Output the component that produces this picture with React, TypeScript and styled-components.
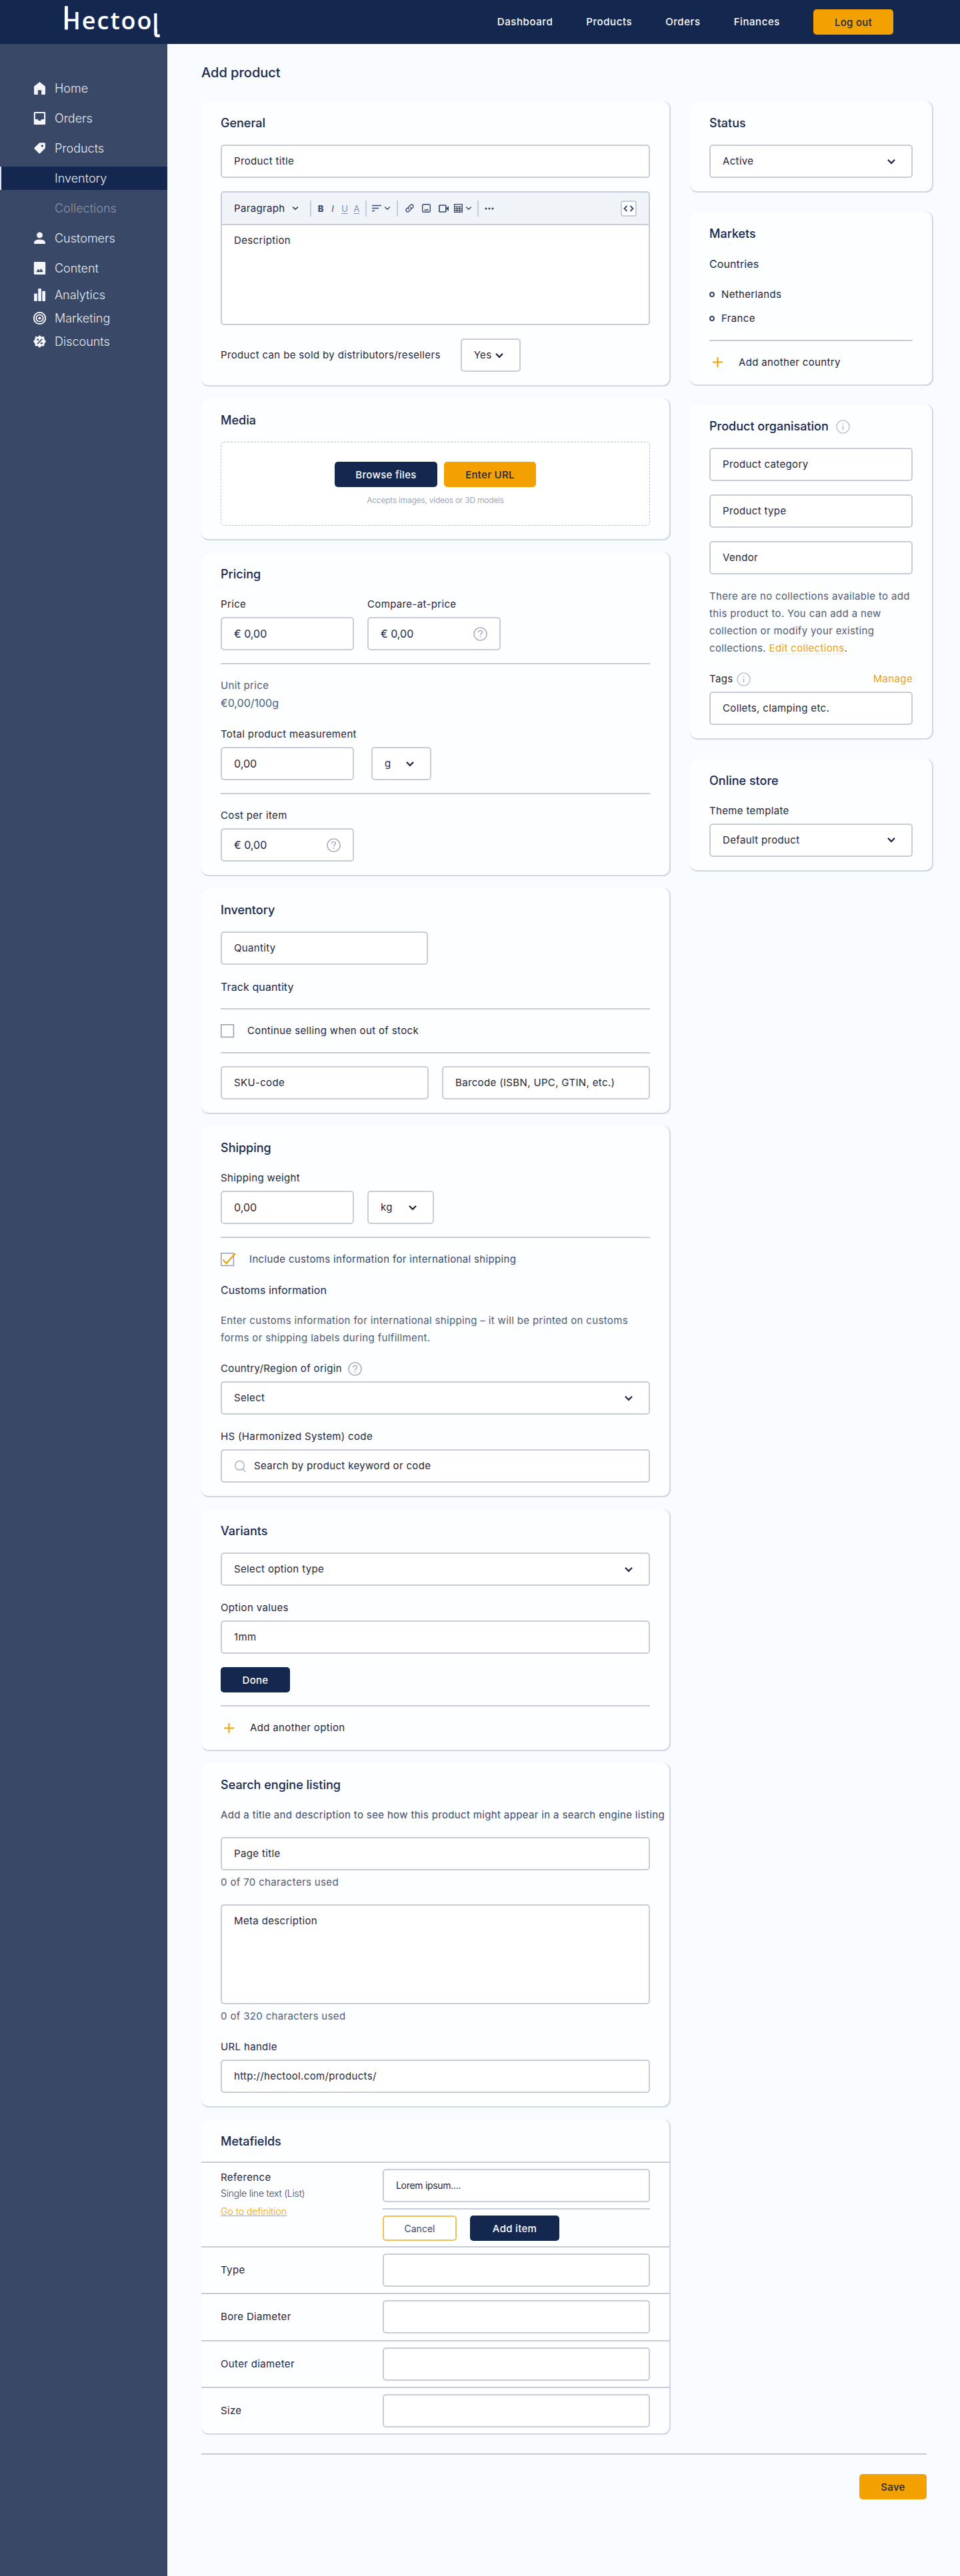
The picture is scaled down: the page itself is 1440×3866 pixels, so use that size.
import React from 'react'
import styled, { createGlobalStyle } from 'styled-components'

const navy = '#14274e'
const slate = '#394867'
const orange = '#f2a100'
const line = '#c8ccd8'
const ink = '#1e263a'
const muted = '#4f5b76'

const GlobalStyle = createGlobalStyle`
  *,
  *::before {
    box-sizing: border-box;
  }

  body {
    margin: 0;
    background: #f8fbff;
    color: ${ink};
    font-family: Inter, 'Open Sans', sans-serif;
    font-size: 15px;
    line-height: 26px;
    letter-spacing: 0.35px;
  }
`

const Header = styled.header`
  display: flex;
  align-items: center;
  justify-content: space-between;
  height: 66px;
  padding: 0 100px 0 94px;
  background: ${navy};

  nav {
    display: flex;
    align-items: center;
    gap: 50px;
  }

  a {
    color: #fff;
    font-weight: 500;
    letter-spacing: 0.58px;
    text-decoration: none;
  }
`

const Body = styled.div`
  display: flex;
  height: 3800px;
`

const Sidebar = styled.aside`
  flex-shrink: 0;
  width: 251px;
  background: ${slate};
  padding-top: 44px;
`

const NavItem = styled.a<{ $height?: number; $active?: boolean; $dim?: boolean }>`
  display: flex;
  align-items: center;
  height: ${({ $height }) => $height || 45}px;
  color: ${({ $dim }) => ($dim ? '#8d94a3' : '#e9ecf1')};
  font-size: 18px;
  font-weight: 300;
  letter-spacing: 0;

  > span {
    display: flex;
    align-items: center;
    width: 100%;
    height: 35px;
    padding-left: ${({ $active }) => ($active ? 48 : 50)}px;
    border-left: ${({ $active }) => ($active ? '2px solid #dfe4ee' : 'none')};
    background: ${({ $active }) => ($active ? navy : 'transparent')};
  }

  i {
    display: flex;
    width: 32px;
    color: #f3f5f9;
  }
`

const Main = styled.main`
  flex: 1;
  padding: 30px 42px 0 51px;

  h1 {
    margin: 0 0 29px;
    color: ${navy};
    font-size: 20px;
    font-weight: 500;
    line-height: 27px;
    letter-spacing: 0;
  }
`

const Columns = styled.div`
  display: grid;
  grid-template-columns: 702px 363px;
  gap: 31px;
  align-items: start;
`

const Column = styled.div<{ $gap: number }>`
  display: flex;
  flex-direction: column;
  gap: ${({ $gap }) => $gap}px;
`

const Card = styled.section<{ $flush?: boolean }>`
  display: flex;
  flex-direction: column;
  gap: 20px;
  padding: ${({ $flush }) => ($flush ? '20px 0 0' : '20px 29px 20px')};
  border-radius: 10px;
  background: #fdfeff;
  box-shadow: 1px 1px 1px 1px rgba(57, 72, 103, 0.2);
  clip-path: inset(0 -4px -4px 0);
`

const CardTitle = styled.h2`
  display: flex;
  align-items: center;
  gap: 11px;
  margin: 0 0 -1px;
  color: ${navy};
  font-size: 18px;
  font-weight: 500;
  line-height: 26px;
  letter-spacing: 0;
`

const SubTitle = styled.h3`
  margin: 0;
  color: ${navy};
  font-size: 16px;
  font-weight: 400;
  line-height: 26px;
  letter-spacing: 0.1px;
`

const Box = styled.div<{ $width?: number; $height?: number }>`
  display: flex;
  align-items: center;
  justify-content: space-between;
  width: ${({ $width }) => ($width ? `${$width}px` : '100%')};
  height: ${({ $height }) => $height || 50}px;
  padding: 0 24px 0 18px;
  border: 2px solid ${line};
  border-radius: 5px;
  background: #fff;
`

const TextArea = styled(Box)`
  align-items: flex-start;
  padding-top: 10px;
`

const Amount = styled.span`
  font-size: 16px;
  letter-spacing: 0;
`

const HelpBox = styled(Box)`
  padding-right: 18px;
`

const Row = styled.div<{ $gap?: number; $center?: boolean }>`
  display: flex;
  align-items: ${({ $center }) => ($center ? 'center' : 'flex-end')};
  gap: ${({ $gap }) => $gap || 20}px;
`

const FieldGroup = styled.div`
  display: flex;
  flex-direction: column;
  gap: 6px;
`

const Label = styled.div<{ $gap?: number }>`
  display: flex;
  align-items: center;
  gap: ${({ $gap }) => $gap || 10}px;
  height: 26px;
`

const LabelLink = styled.a`
  margin-left: auto;
  color: ${orange};
`

const Divider = styled.hr`
  width: 100%;
  height: 2px;
  margin: -1px 0;
  border: 0;
  background: ${line};
`

const Copy = styled.p<{ $tone?: string }>`
  margin: 0;
  color: ${({ $tone }) => $tone || muted};

  a {
    color: ${orange};
    text-decoration: underline;
    text-decoration-color: #e6e8ee;
    text-underline-offset: 3px;
  }
`

const WideCopy = styled(Copy)`
  margin-right: -25px;
  color: ${slate};
  white-space: nowrap;
`

const Counter = styled.div`
  height: 26px;
  margin: -15px 0 0;
  color: ${muted};
`

const Button = styled.button<{ $variant?: 'orange' | 'outline'; $width: number }>`
  width: ${({ $width }) => $width}px;
  height: 38px;
  padding: 0;
  border: ${({ $variant }) =>
    $variant === 'outline' ? '2px solid #f7bc50' : 'none'};
  border-radius: 5px;
  background: ${({ $variant }) =>
    $variant === 'orange' ? orange : $variant === 'outline' ? '#fff' : navy};
  color: ${({ $variant }) =>
    $variant === 'orange' ? navy : $variant === 'outline' ? slate : '#fff'};
  font-family: inherit;
  font-size: ${({ $variant }) => ($variant === 'outline' ? 14 : 15)}px;
  font-weight: ${({ $variant }) => ($variant === 'outline' ? 400 : 500)};
  letter-spacing: ${({ $variant }) => ($variant === 'outline' ? 0 : 0.3)}px;
`

const Editor = styled.div`
  height: 201px;
  border: 2px solid ${line};
  border-radius: 5px;
  background: #fff;
  overflow: hidden;

  p {
    margin: 10px 18px;
  }
`

const Toolbar = styled.div`
  display: flex;
  align-items: center;
  height: 49px;
  padding: 0 18px;
  border-bottom: 2px solid ${line};
  background: #f0f4f8;
  color: ${slate};
`

const ToolSeparator = styled.span`
  width: 2px;
  height: 24px;
  background: ${line};
`

const ParagraphSelect = styled.span`
  display: flex;
  align-items: center;
  justify-content: space-between;
  width: 114px;
  padding-right: 17px;
  color: ${ink};
`

const TextTools = styled.span`
  display: flex;
  padding: 0 4px 0 5px;
  font-size: 13px;
  letter-spacing: 0;

  > * {
    width: 18px;
    text-align: center;
  }

  b {
    font-weight: 800;
  }

  u {
    color: #8790a4;
    text-underline-offset: 2px;
  }
`

const ToolGroup = styled.span<{ $gap: number; $padding: string }>`
  display: flex;
  align-items: center;
  gap: ${({ $gap }) => $gap}px;
  padding: ${({ $padding }) => $padding};
`

const CodeButton = styled.span`
  display: flex;
  align-items: center;
  justify-content: center;
  width: 24px;
  height: 24px;
  margin-left: auto;
  border: 2px solid ${line};
  border-radius: 4px;
  background: #fff;
`

const DropZone = styled.div`
  display: flex;
  flex-direction: column;
  align-items: center;
  height: 126px;
  padding-top: 29px;
  border: 1px dashed #b9bfcd;
  border-radius: 5px;
  background: #fff;

  small {
    margin-top: 7px;
    color: #a0a8b9;
    font-size: 12px;
    letter-spacing: -0.25px;
  }
`

const CheckRow = styled.div<{ $gap: number }>`
  display: flex;
  align-items: center;
  gap: ${({ $gap }) => $gap}px;
  height: 26px;
`

const AddRow = styled.div`
  display: flex;
  align-items: center;
  gap: 24px;
  height: 26px;
  padding-left: 5px;
`

const CountryList = styled.ul`
  display: flex;
  flex-direction: column;
  gap: 10px;
  margin: 0;
  padding: 0;
  list-style: none;

  li {
    display: flex;
    align-items: center;
    gap: 10px;
  }

  li::before {
    content: '';
    width: 8px;
    height: 8px;
    border: 2px solid ${slate};
    border-radius: 50%;
  }
`

const SearchText = styled.span`
  display: flex;
  align-items: center;
  gap: 11px;
`

const MetaTitle = styled.div`
  padding: 0 29px;
`

const MetaRows = styled.div`
  margin-top: -2px;
`

const MetaRow = styled.div<{ $tall?: boolean }>`
  display: flex;
  align-items: ${({ $tall }) => ($tall ? 'flex-start' : 'center')};
  justify-content: space-between;
  height: ${({ $tall }) => ($tall ? '127px' : '70.3px')};
  padding: ${({ $tall }) => ($tall ? '9px 29px 0' : '0 29px')};
  border-top: 2px solid ${line};
`

const Definition = styled.div`
  padding-top: 1px;

  div {
    line-height: 24px;
  }

  small {
    display: block;
    color: ${slate};
    font-size: 14px;
    font-weight: 300;
    line-height: 24px;
    letter-spacing: -0.2px;
  }

  a {
    display: block;
    margin-top: 2px;
    color: ${orange};
    font-size: 14px;
    font-weight: 300;
    line-height: 26px;
    letter-spacing: 0;
    text-decoration: underline;
  }
`

const MetaValue = styled.div`
  display: flex;
  flex-direction: column;
  gap: 10px;
  width: 401px;

  > div:first-child {
    font-size: 14px;
    letter-spacing: -0.3px;
  }
`

const Footer = styled.footer`
  display: flex;
  flex-direction: column;
  align-items: flex-end;
  gap: 29px;
  width: 1088px;
  margin-top: 30px;
`

const FooterLine = styled(Divider)`
  margin: 0;
`

function Logo() {
  return (
    <svg width='150' height='56' viewBox='0 0 150 56' fill='#fff'>
      <rect x='3' y='4' width='4.9' height='35.5' rx='1' />
      <text x='-0.3' y='39.4' fontFamily='Open Sans' fontSize='36' fontWeight='600' letterSpacing='2'>
        Hectoo
      </text>
      <text x='134.2' y='42' fontFamily='Open Sans' fontSize='36' fontWeight='600'>
        l
      </text>
      <path d='M139.6 38v8q0 2.8 2.8 2.8h3.3' fill='none' stroke='#fff' strokeWidth='4.6' />
    </svg>
  )
}

function Chevron({ small }: { small?: boolean }) {
  return (
    <svg width={small ? 10 : 12} height={small ? 7 : 9} viewBox='0 0 12 9' fill='none'>
      <path
        d='M1 1.8l5 5 5-5'
        stroke='currentColor'
        strokeWidth={small ? 1.8 : 2.3}
      />
    </svg>
  )
}

function Badge({ glyph }: { glyph: 'i' | '?' }) {
  return (
    <svg width='21' height='21' viewBox='0 0 21 21' fill='none' stroke={glyph === 'i' ? '#b8bdca' : '#9aa3b5'}>
      <circle cx='10.5' cy='10.5' r='9.6' strokeWidth='1.4' />
      {glyph === 'i' ? (
        <path d='M10.5 5.5v1.8M10.5 9v6.5' strokeWidth='1.6' />
      ) : (
        <path
          d='M7.6 8.2c0-1.8 1.2-2.9 2.9-2.9s2.9 1 2.9 2.6c0 2.2-2.9 2.2-2.9 4.6M10.5 14.3v1.6'
          strokeWidth='1.3'
        />
      )}
    </svg>
  )
}

function Plus() {
  return (
    <svg width='15' height='15' viewBox='0 0 15 15' stroke={orange} strokeWidth='2'>
      <path d='M7.5 0v15M0 7.5h15' />
    </svg>
  )
}

function Checkbox({ checked }: { checked?: boolean }) {
  return (
    <svg width='23' height='22' viewBox='0 0 23 22' fill='none'>
      <rect x='0.8' y='1.8' width='18.6' height='18.6' fill='#fff' stroke='#9aa3b5' strokeWidth='1.6' />
      {checked && (
        <path d='M3.5 11.5l5 5.5L22 2.2' stroke={orange} strokeWidth='2.3' />
      )}
    </svg>
  )
}

function SearchIcon() {
  return (
    <svg width='19' height='19' viewBox='0 0 19 19' fill='none' stroke='#aab1c0' strokeWidth='1.5'>
      <circle cx='8.5' cy='8.3' r='6.8' />
      <path d='M13 13.5l4.5 4.5' />
    </svg>
  )
}

const navIcons: Record<string, React.ReactNode> = {
  home: <path d='M9 0L1 6.5V17q0 1 1 1h4.5v-6.5h5V18H16q1 0 1-1V6.5z' />,
  orders: (
    <path
      fillRule='evenodd'
      d='M2 0h14q1.2 0 1.2 1.2v15.6q0 1.2-1.2 1.2H2q-1.2 0-1.2-1.2V1.2Q.8 0 2 0zm.8 2v8.5h3.4l1.5 2h2.6l1.5-2h3.4V2z'
    />
  ),
  products: (
    <path
      fillRule='evenodd'
      d='M9.5 1.2H16q1 0 1 1V8q0 .7-.5 1.2l-6.8 6.9q-.9.9-1.8 0L1.7 9.9q-.9-.9 0-1.8l6.5-6.4q.5-.5 1.3-.5zM12.6 4a1.6 1.6 0 1 0 0 3.2 1.6 1.6 0 0 0 0-3.2z'
    />
  ),
  customers: (
    <>
      <circle cx='9' cy='4.6' r='4.2' />
      <path d='M1 17v-1.5q0-4.5 8-4.5t8 4.5V17z' />
    </>
  ),
  content: (
    <path
      fillRule='evenodd'
      d='M2 0h14q1.2 0 1.2 1.2v15.6q0 1.2-1.2 1.2H2q-1.2 0-1.2-1.2V1.2Q.8 0 2 0zM4 14.5h10l-2.8-5-2.2 3-1.9-2.5z'
    />
  ),
  analytics: (
    <>
      <rect x='1' y='7' width='4.5' height='11' rx='1' />
      <rect x='6.8' y='0' width='4.5' height='18' rx='1' />
      <rect x='12.6' y='3.5' width='4.5' height='14.5' rx='1' />
    </>
  ),
  marketing: (
    <>
      <g fill='none' stroke='currentColor' strokeWidth='1.8'>
        <circle cx='9' cy='9' r='8.2' />
        <circle cx='9' cy='9' r='4.9' />
      </g>
      <circle cx='9' cy='9' r='2' />
    </>
  ),
  discounts: (
    <>
      <path d='M9 0l2.5 2.3 3.7-.5.4 3.6L18 9l-2.4 3.2-.4 3.5-3.7-.4L9 18l-2.5-2.7-3.7.4-.4-3.5L0 9l2.4-3.6.4-3.6 3.7.5z' />
      <path d='M5.8 12.4l6.5-6.8' stroke={slate} strokeWidth='1.5' />
      <circle cx='6.4' cy='6.5' r='1.4' fill={slate} />
      <circle cx='11.7' cy='11.5' r='1.4' fill={slate} />
    </>
  )
}

const navItems = [
  { label: 'Home', icon: 'home' },
  { label: 'Orders', icon: 'orders' },
  { label: 'Products', icon: 'products' },
  { label: 'Inventory', active: true },
  { label: 'Collections', dim: true },
  { label: 'Customers', icon: 'customers' },
  { label: 'Content', icon: 'content' },
  { label: 'Analytics', icon: 'analytics', height: 35 },
  { label: 'Marketing', icon: 'marketing', height: 35 },
  { label: 'Discounts', icon: 'discounts', height: 35 }
]

function Navigation() {
  return (
    <Sidebar>
      {navItems.map(({ label, icon, active, dim, height }) => (
        <NavItem key={label} $active={active} $dim={dim} $height={height}>
          <span>
            <i>
              {icon && (
                <svg width='19' height='19' viewBox='0 0 18 18' fill='currentColor'>
                  {navIcons[icon]}
                </svg>
              )}
            </i>
            {label}
          </span>
        </NavItem>
      ))}
    </Sidebar>
  )
}

function Select({ value, width }: { value: string; width?: number }) {
  return (
    <Box $width={width}>
      {value}
      <Chevron />
    </Box>
  )
}

function EditorToolbar() {
  return (
    <Toolbar>
      <ParagraphSelect>
        Paragraph
        <Chevron small />
      </ParagraphSelect>
      <ToolSeparator />
      <TextTools>
        <b>B</b>
        <em>I</em>
        <u>U</u>
        <u>A</u>
      </TextTools>
      <ToolSeparator />
      <ToolGroup $gap={4} $padding='0 9px 0 8px'>
        <svg width='14' height='11' viewBox='0 0 14 11' stroke='currentColor' strokeWidth='1.7'>
          <path d='M0 1.5h14M0 5.5h10M0 9.5h4' />
        </svg>
        <Chevron small />
      </ToolGroup>
      <ToolSeparator />
      <ToolGroup $gap={12} $padding='0 0 0 11px'>
        <svg width='13' height='13' viewBox='0 0 13 13' fill='none' stroke='currentColor' strokeWidth='1.4' strokeLinecap='round'>
          <path d='M5.2 7.8a2.5 2.5 0 0 1 0-3.5l2.4-2.5a2.5 2.5 0 0 1 3.6 3.6L9.8 6.8M7.8 5.2a2.5 2.5 0 0 1 0 3.5l-2.4 2.5a2.5 2.5 0 0 1-3.6-3.6l1.4-1.4' />
        </svg>
        <svg width='13' height='13' viewBox='0 0 13 13' fill='none' stroke='currentColor' strokeWidth='1.4'>
          <rect x='0.7' y='0.7' width='11.6' height='11.6' rx='1.5' />
          <path d='M3 10l1.8-2.5L6.3 9.5 8 7l2 3z' fill='currentColor' stroke='none' />
        </svg>
        <svg width='15' height='12' viewBox='0 0 15 12' fill='none' stroke='currentColor' strokeWidth='1.7'>
          <rect x='0.9' y='1' width='10' height='10' rx='1' />
          <path d='M11 6l4-4v8z' fill='currentColor' stroke='none' />
        </svg>
      </ToolGroup>
      <ToolGroup $gap={4} $padding='0 8px'>
        <svg width='13' height='13' viewBox='0 0 13 13' fill='none' stroke='currentColor' strokeWidth='1.2'>
          <rect x='0.6' y='0.6' width='11.8' height='11.8' />
          <path d='M.6 4h11.8M.6 6.9h11.8M.6 9.7h11.8M4.5 4v8.4M8.5 4v8.4' />
        </svg>
        <Chevron small />
      </ToolGroup>
      <ToolSeparator />
      <ToolGroup $gap={0} $padding='0 9px'>
        <svg width='14' height='4' viewBox='0 0 14 4' fill='currentColor'>
          <circle cx='2' cy='2' r='1.6' />
          <circle cx='7' cy='2' r='1.6' />
          <circle cx='12' cy='2' r='1.6' />
        </svg>
      </ToolGroup>
      <CodeButton>
        <svg width='16' height='10' viewBox='0 0 16 10' fill='none' stroke='currentColor' strokeWidth='1.9'>
          <path d='M5.5 1L1.5 5l4 4M10.5 1l4 4-4 4' />
        </svg>
      </CodeButton>
    </Toolbar>
  )
}

function ProductForm() {
  return (
    <Column $gap={20}>
      <Card>
        <CardTitle>General</CardTitle>
        <Box>Product title</Box>
        <Editor>
          <EditorToolbar />
          <p>Description</p>
        </Editor>
        <Row $center $gap={30}>
          Product can be sold by distributors/resellers
          <Select value='Yes' width={90} />
        </Row>
      </Card>

      <Card>
        <CardTitle>Media</CardTitle>
        <DropZone>
          <Row $gap={10}>
            <Button $width={154}>Browse files</Button>
            <Button $width={138} $variant='orange'>
              Enter URL
            </Button>
          </Row>
          <small>Accepts images, videos or 3D models</small>
        </DropZone>
      </Card>

      <Card>
        <CardTitle>Pricing</CardTitle>
        <Row>
          <FieldGroup>
            <Label>Price</Label>
            <Box $width={200}>
              <Amount>€ 0,00</Amount>
            </Box>
          </FieldGroup>
          <FieldGroup>
            <Label>Compare-at-price</Label>
            <HelpBox $width={200}>
              <Amount>€ 0,00</Amount>
              <Badge glyph='?' />
            </HelpBox>
          </FieldGroup>
        </Row>
        <Divider />
        <Copy>
          Unit price
          <br />
          <Amount>€0,00/100g</Amount>
        </Copy>
        <FieldGroup>
          <Label>Total product measurement</Label>
          <Row $gap={26}>
            <Box $width={200}>
              <Amount>0,00</Amount>
            </Box>
            <Select value='g' width={90} />
          </Row>
        </FieldGroup>
        <Divider />
        <FieldGroup>
          <Label>Cost per item</Label>
          <HelpBox $width={200}>
            <Amount>€ 0,00</Amount>
            <Badge glyph='?' />
          </HelpBox>
        </FieldGroup>
      </Card>

      <Card>
        <CardTitle>Inventory</CardTitle>
        <Box $width={311}>Quantity</Box>
        <SubTitle>Track quantity</SubTitle>
        <Divider />
        <CheckRow $gap={17}>
          <Checkbox />
          Continue selling when out of stock
        </CheckRow>
        <Divider />
        <Row>
          <Box>SKU-code</Box>
          <Box>Barcode (ISBN, UPC, GTIN, etc.)</Box>
        </Row>
      </Card>

      <Card>
        <CardTitle>Shipping</CardTitle>
        <FieldGroup>
          <Label>Shipping weight</Label>
          <Row>
            <Box $width={200}>
              <Amount>0,00</Amount>
            </Box>
            <Select value='kg' width={100} />
          </Row>
        </FieldGroup>
        <Divider />
        <CheckRow $gap={20}>
          <Checkbox checked />
          <Copy $tone={slate}>Include customs information for international shipping</Copy>
        </CheckRow>
        <SubTitle>Customs information</SubTitle>
        <Copy>
          Enter customs information for international shipping – it will be printed on customs
          <br />
          forms or shipping labels during fulfillment.
        </Copy>
        <FieldGroup>
          <Label $gap={9}>
            Country/Region of origin
            <Badge glyph='?' />
          </Label>
          <Select value='Select' />
        </FieldGroup>
        <FieldGroup>
          <Label>HS (Harmonized System) code</Label>
          <Box>
            <SearchText>
              <SearchIcon />
              Search by product keyword or code
            </SearchText>
          </Box>
        </FieldGroup>
      </Card>

      <Card>
        <CardTitle>Variants</CardTitle>
        <Select value='Select option type' />
        <FieldGroup>
          <Label>Option values</Label>
          <Box>1mm</Box>
        </FieldGroup>
        <Button $width={104}>Done</Button>
        <Divider />
        <AddRow>
          <Plus />
          Add another option
        </AddRow>
      </Card>

      <Card>
        <CardTitle>Search engine listing</CardTitle>
        <WideCopy>
          Add a title and description to see how this product might appear in a search engine listing
        </WideCopy>
        <Box>Page title</Box>
        <Counter>0 of 70 characters used</Counter>
        <TextArea $height={150}>Meta description</TextArea>
        <Counter>0 of 320 characters used</Counter>
        <FieldGroup>
          <Label>URL handle</Label>
          <Box>http://hectool.com/products/</Box>
        </FieldGroup>
      </Card>

      <Card $flush>
        <MetaTitle>
          <CardTitle>Metafields</CardTitle>
        </MetaTitle>
        <MetaRows>
          <MetaRow $tall>
            <Definition>
              <div>Reference</div>
              <small>Single line text (List)</small>
              <a>Go to definition</a>
            </Definition>
            <MetaValue>
              <Box>Lorem ipsum....</Box>
              <Divider />
              <Row>
                <Button $width={111} $variant='outline'>
                  Cancel
                </Button>
                <Button $width={134}>Add item</Button>
              </Row>
            </MetaValue>
          </MetaRow>
          {['Type', 'Bore Diameter', 'Outer diameter', 'Size'].map((name) => (
            <MetaRow key={name}>
              {name}
              <Box $width={401} />
            </MetaRow>
          ))}
        </MetaRows>
      </Card>
    </Column>
  )
}

function ProductSettings() {
  return (
    <Column $gap={30.5}>
      <Card>
        <CardTitle>Status</CardTitle>
        <Select value='Active' />
      </Card>

      <Card>
        <CardTitle>Markets</CardTitle>
        <SubTitle>Countries</SubTitle>
        <CountryList>
          <li>Netherlands</li>
          <li>France</li>
        </CountryList>
        <Divider />
        <AddRow>
          <Plus />
          Add another country
        </AddRow>
      </Card>

      <Card>
        <CardTitle>
          Product organisation
          <Badge glyph='i' />
        </CardTitle>
        <Box>Product category</Box>
        <Box>Product type</Box>
        <Box>Vendor</Box>
        <Copy>
          There are no collections available to add
          <br />
          this product to. You can add a new
          <br />
          collection or modify your existing
          <br />
          collections. <a>Edit collections</a>.
        </Copy>
        <FieldGroup>
          <Label $gap={5}>
            Tags
            <Badge glyph='i' />
            <LabelLink>Manage</LabelLink>
          </Label>
          <Box>Collets, clamping etc.</Box>
        </FieldGroup>
      </Card>

      <Card>
        <CardTitle>Online store</CardTitle>
        <FieldGroup>
          <Label>Theme template</Label>
          <Select value='Default product' />
        </FieldGroup>
      </Card>
    </Column>
  )
}

export default function App() {
  return (
    <>
      <GlobalStyle />
      <Header>
        <Logo />
        <nav>
          <a>Dashboard</a>
          <a>Products</a>
          <a>Orders</a>
          <a>Finances</a>
          <Button $width={120} $variant='orange'>
            Log out
          </Button>
        </nav>
      </Header>
      <Body>
        <Navigation />
        <Main>
          <h1>Add product</h1>
          <Columns>
            <ProductForm />
            <ProductSettings />
          </Columns>
          <Footer>
            <FooterLine />
            <Button $width={101} $variant='orange'>
              Save
            </Button>
          </Footer>
        </Main>
      </Body>
    </>
  )
}
